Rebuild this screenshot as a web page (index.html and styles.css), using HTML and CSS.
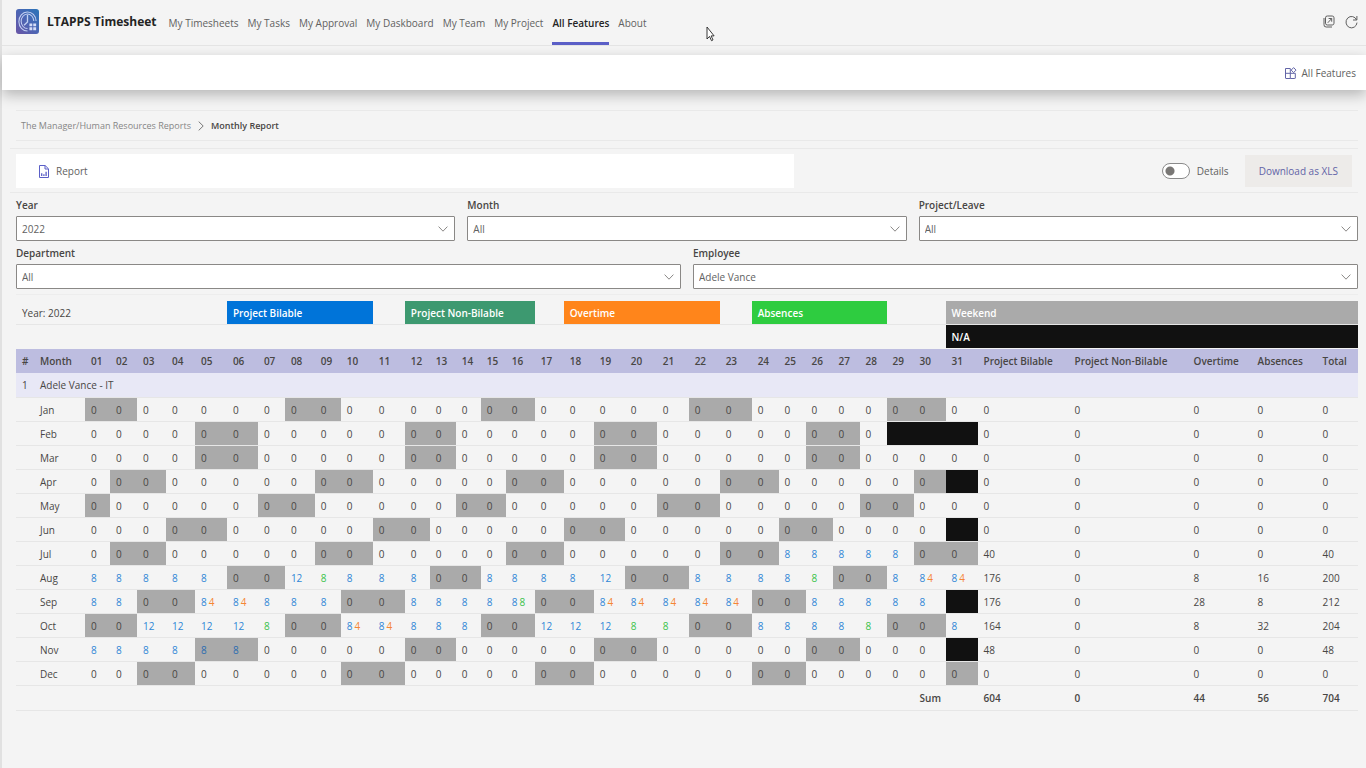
FILE: index.html
```html
<!DOCTYPE html>
<html lang="en">
<head>
<meta charset="utf-8">
<title>LTAPPS Timesheet</title>
<link rel="stylesheet" href="styles.css">
</head>
<body>
<div class="app">
  <header class="topbar">
    <svg class="logo" viewBox="0 0 24 26" aria-hidden="true">
      <defs><linearGradient id="logoFill" x1="0" y1="1" x2="1" y2="0"><stop offset="0" stop-color="#6a55a6"/><stop offset="0.5" stop-color="#4c66b4"/><stop offset="1" stop-color="#2a74b8"/></linearGradient></defs>
      <rect width="24" height="26" rx="3" fill="url(#logoFill)"/>
      <g fill="none" stroke="#c3d0f2" stroke-width="1.1">
        <path d="M21 12.5A9 10 0 1 0 12 23"/>
        <path d="M18.6 12.5A6.6 7.6 0 1 0 12 20.4"/>
        <path d="M12 6v7.5L8.4 17" stroke-width="1.4"/>
      </g>
      <path d="M14 15h3v3h-3zM18 15h3v3h-3zM14 19h3v3h-3zM18 19h3v3h-3z" fill="#d5def8"/>
    </svg>
    <h1 class="brand">LTAPPS Timesheet</h1>
    <nav class="tabs">
      <a href="#">My Timesheets</a>
      <a href="#">My Tasks</a>
      <a href="#">My Approval</a>
      <a href="#">My Daskboard</a>
      <a href="#">My Team</a>
      <a href="#">My Project</a>
      <a href="#" class="current">All Features</a>
      <a href="#">About</a>
    </nav>
    <div class="tools">
      <button type="button" aria-label="Open in new window">
        <svg width="12" height="13" viewBox="0 0 12 13"><g fill="none" stroke="#5f5f5f"><rect x="2.5" y="1" width="8.5" height="9" rx="1.8"/><path d="M1 3v6.5A2.2 2.2 0 0 0 3.2 12H9"/><path d="M4.8 7.8 8.6 3.6M5.6 3.5h3.1v3.2"/></g></svg>
      </button>
      <button type="button" aria-label="Refresh">
        <svg width="13" height="14" viewBox="0 0 13 14"><path d="M11.6 5A5.5 5.7 0 1 0 12 7.6M11.9 1v4H8" fill="none" stroke="#5f5f5f"/></svg>
      </button>
    </div>
  </header>

  <div class="commandbar">
    <a href="#" class="command">
      <svg width="12" height="12" viewBox="0 0 12 12"><path d="M.5 1.5h4.8v10H1a.5.5 0 0 1-.5-.5zM.5 6.3h9.8v4.7a.5.5 0 0 1-.5.5H5.3M8.6.6l2.4 2.5-2.4 2.5-2.4-2.5z" fill="none" stroke="#6264a7"/></svg>
      All Features
    </a>
  </div>

  <main class="content">
    <nav class="breadcrumb" aria-label="Breadcrumb">
      <a href="#">The Manager/Human Resources Reports</a>
      <svg width="6" height="10" viewBox="0 0 6 10"><path d="M.7.6 5.2 5 .7 9.4" fill="none" stroke="#777"/></svg>
      <span class="here">Monthly Report</span>
    </nav>

    <section class="actions">
      <button type="button" class="report">
        <svg width="10" height="13" viewBox="0 0 10 13"><path d="M.5.5h5.6l3.4 3.3v8.7h-9zM6 .7V4h3.3" fill="none" stroke="#5b5fc7"/><path d="M2.7 11V8.2M4.9 11V9.2M7.1 11V6.8" stroke="#5b5fc7" stroke-width="1.3"/></svg>
        Report
      </button>
      <label class="details"><input type="checkbox" role="switch" class="switch">Details</label>
      <button type="button" class="download">Download as XLS</button>
    </section>

    <form class="filters">
      <div class="filter-row">
        <div class="field"><label for="year">Year</label><div class="picker"><select id="year"><option>2022</option></select><svg viewBox="0 0 10 6"><path d="M.6.6 5 5.2 9.4.6"/></svg></div></div>
        <div class="field"><label for="month">Month</label><div class="picker"><select id="month"><option>All</option></select><svg viewBox="0 0 10 6"><path d="M.6.6 5 5.2 9.4.6"/></svg></div></div>
        <div class="field"><label for="project">Project/Leave</label><div class="picker"><select id="project"><option>All</option></select><svg viewBox="0 0 10 6"><path d="M.6.6 5 5.2 9.4.6"/></svg></div></div>
      </div>
      <div class="filter-row">
        <div class="field"><label for="department">Department</label><div class="picker"><select id="department"><option>All</option></select><svg viewBox="0 0 10 6"><path d="M.6.6 5 5.2 9.4.6"/></svg></div></div>
        <div class="field"><label for="employee">Employee</label><div class="picker"><select id="employee"><option>Adele Vance</option></select><svg viewBox="0 0 10 6"><path d="M.6.6 5 5.2 9.4.6"/></svg></div></div>
      </div>
    </form>

    <table class="sheet">
      <colgroup id="cols"></colgroup>
      <thead>
        <tr class="legend">
          <td colspan="7">Year: 2022</td>
          <td colspan="5" class="key billable">Project Bilable</td><td></td>
          <td colspan="5" class="key nonbillable">Project Non-Bilable</td><td></td>
          <td colspan="5" class="key overtime">Overtime</td><td></td>
          <td colspan="5" class="key absences">Absences</td><td colspan="2"></td>
          <td colspan="6" class="key weekend">Weekend</td>
        </tr>
        <tr class="legend last"><td colspan="32"></td><td colspan="6" class="key na">N/A</td></tr>
        <tr class="heads" id="heads"></tr>
      </thead>
      <tbody id="rows">
        <tr class="person"><td>1</td><td colspan="37">Adele Vance - IT</td></tr>
      </tbody>
      <tfoot>
        <tr class="sum"><td colspan="31"></td><td colspan="2">Sum</td><td>604</td><td>0</td><td>44</td><td>56</td><td>704</td></tr>
      </tfoot>
    </table>
  </main>

  <svg class="cursor" width="9" height="16" viewBox="0 0 9 16" aria-hidden="true"><path d="M1 1v12l2.5-2.6 2 4.3 1.5-.8-1.9-4h3z" fill="#fff" stroke="#222" stroke-width=".9"/></svg>
</div>
<script src="report.js"></script>
</body>
</html>
```
FILE: styles.css
```css
* { box-sizing: border-box; }

body {
  margin: 0;
  background: #f4f4f4;
  color: #484644;
  font: 10px/14px "Open Sans", "Noto Sans", sans-serif;
}

a { color: inherit; text-decoration: none; }

button, select { font: inherit; color: inherit; }

.app {
  position: relative;
  min-height: 100vh;
  border-left: 2px solid #e1e1e1;
}

.topbar {
  display: flex;
  align-items: center;
  height: 46px;
  padding: 0 8px 0 14px;
  border-bottom: 1px solid #e4e4e4;
}

.logo { width: 23px; height: 25px; flex: none; margin-bottom: 2px; }

.brand {
  margin: 0 12px 2px 8px;
  color: #242424;
  font-size: 12px;
  line-height: 18px;
  font-weight: 700;
  white-space: nowrap;
}

.tabs { display: flex; align-self: stretch; gap: 9px; color: #616161; }

.tabs a {
  display: flex;
  align-items: center;
  border-top: 3px solid transparent;
  border-bottom: 3px solid transparent;
  white-space: nowrap;
}

.tabs .current { color: #242424; font-weight: 600; border-bottom-color: #5b5fc7; }

.tools { display: flex; gap: 10px; margin-left: auto; margin-bottom: 2px; }

.tools button { display: flex; padding: 0; border: 0; background: none; align-items: center; }

.commandbar {
  display: flex;
  justify-content: flex-end;
  align-items: center;
  height: 35px;
  margin-top: 9px;
  padding-right: 10px;
  background: #fff;
  box-shadow: 0 5px 14px rgba(0, 0, 0, .26);
}

.command { display: flex; align-items: center; gap: 5px; color: #616161; }

.content { padding: 20px 8px 0; }

.breadcrumb {
  display: flex;
  align-items: center;
  gap: 7px;
  height: 31px;
  margin: 0 0 7px 6px;
  padding-left: 5px;
  border: solid #e9e9e9;
  border-width: 1px 0;
  color: #868686;
  font-size: 9px;
}

.here { color: #484644; font-weight: 600; }

.actions {
  display: flex;
  align-items: center;
  height: 45px;
  padding: 1px 6px 0;
  border: solid #e9e9e9;
  border-width: 1px 0;
}

.report {
  display: flex;
  align-items: center;
  gap: 7px;
  width: calc(58% + 3px);
  height: 34px;
  margin-right: auto;
  padding: 0 23px;
  border: 0;
  background: #fff;
  color: #616161;
}

.details { display: flex; align-items: center; gap: 7px; margin-right: 16px; color: #616161; }

.switch {
  appearance: none;
  width: 28px;
  height: 16px;
  margin: 0;
  border: 1px solid #8a8a8a;
  border-radius: 8px;
  background: radial-gradient(circle at 7px 7px, #797775 4px, transparent 5px) #fff;
}

.download {
  height: 32px;
  padding: 0 14px;
  border: 0;
  background: #edebe9;
  color: #6264a7;
  white-space: nowrap;
}

.filters { display: grid; gap: 5px; margin-left: 6px; padding: 5px 0; border-bottom: 1px solid #ededed; }

.filter-row { display: flex; gap: 12px; }

.field { flex: 1 1 0; }

.field label { display: block; height: 18px; line-height: 14px; font-weight: 600; }

.picker { position: relative; }

.picker select {
  display: block;
  appearance: none;
  width: 100%;
  height: 25px;
  padding: 0 5px;
  border: 1px solid #8a8886;
  border-radius: 1px;
  background: #fff;
  color: #616161;
}

.picker svg {
  position: absolute;
  top: 10px;
  right: 7px;
  width: 10px;
  height: 6px;
  fill: none;
  stroke: #8a8886;
  pointer-events: none;
}

.sheet {
  table-layout: fixed;
  width: calc(100% - 6px);
  margin: 6px 0 0 6px;
  border-collapse: separate;
  border-spacing: 0;
}

.sheet td, .sheet th {
  height: 24px;
  padding: 0 0 0 6px;
  border-bottom: 1px solid #e6e6e6;
  background-clip: padding-box;
  text-align: left;
  white-space: nowrap;
}

.key { color: #fff; font-weight: 600; }
.billable { background-color: #0074d9; }
.nonbillable { background-color: #3d9970; }
.overtime { background-color: #ff851b; }
.absences { background-color: #2ecc40; }
.weekend { background-color: #aaa; }
.na { background-color: #111; }

.sheet .last td, .sheet .heads th { border-bottom-color: transparent; }

.heads { background: #bdbde0; }
.heads th { font-weight: 600; }

.person { background: #e8e8f6; }

.sheet .person td, .sheet .sum td { height: 25px; }

.b { color: #2f86d6; }
.o { color: #f58634; }
.g { color: #3ac24a; }

.weekend .b { color: #2a6cb0; }

.o, .b + .g { margin-left: 2px; }

.sum td { font-weight: 600; }

.cursor { position: absolute; left: 704px; top: 26px; }
```
FILE: report.js
```js
const widths = [18, 51, 25, 27, 29, 29, 32, 31, 27, 30, 26, 32, 32, 25, 26, 25, 25, 29, 29, 30, 31, 32,
  32, 31, 32, 27, 27, 27, 27, 27, 27, 32, 32, 91, 119, 64, 65, 41];
const total = widths.reduce((a, b) => a + b, 0);

document.getElementById("cols").innerHTML = widths
  .map(w => `<col style="width:${w / total * 100}%">`).join("");

const days = Array.from({ length: 31 }, (_, i) => String(i + 1).padStart(2, "0"));
document.getElementById("heads").innerHTML =
  ["#", "Month", ...days, "Project Bilable", "Project Non-Bilable", "Overtime", "Absences", "Total"]
    .map(t => `<th scope="col">${t}</th>`).join("");

/* One character per day: . none, 8 billable, T twelve billable, + billable with overtime,
   A absence, H billable with absence */
const hours = {
  Jul: "........................88888..",
  Aug: "88888..TA888..8888T..8888A..8++",
  Sep: "88..++888..8888H..+++++..88888",
  Oct: "..TTTTA..++888..TTTAA..8888A..8",
  Nov: "888888"
};
const totals = {
  Jul: [40, 0, 0, 0, 40],
  Aug: [176, 0, 8, 16, 200],
  Sep: [176, 0, 28, 8, 212],
  Oct: [164, 0, 8, 32, 204],
  Nov: [48, 0, 0, 0, 48]
};
const marks = {
  ".": "0",
  "8": '<span class="b">8</span>',
  "T": '<span class="b">12</span>',
  "A": '<span class="g">8</span>',
  "+": '<span class="b">8</span><span class="o">4</span>',
  "H": '<span class="b">8</span><span class="g">8</span>'
};

const rows = document.getElementById("rows");
"Jan Feb Mar Apr May Jun Jul Aug Sep Oct Nov Dec".split(" ").forEach((name, m) => {
  const count = new Date(2022, m + 1, 0).getDate();
  let html = `<td></td><td>${name}</td>`;
  for (let d = 1; d <= 31; d++) {
    if (d > count) { html += '<td class="na"></td>'; continue; }
    const off = new Date(2022, m, d).getDay() % 6 === 0;
    const mark = (hours[name] || "")[d - 1] || ".";
    html += `<td${off ? ' class="weekend"' : ""}>${marks[mark]}</td>`;
  }
  html += (totals[name] || [0, 0, 0, 0, 0]).map(v => `<td>${v}</td>`).join("");
  rows.insertAdjacentHTML("beforeend", `<tr>${html}</tr>`);
});
```
